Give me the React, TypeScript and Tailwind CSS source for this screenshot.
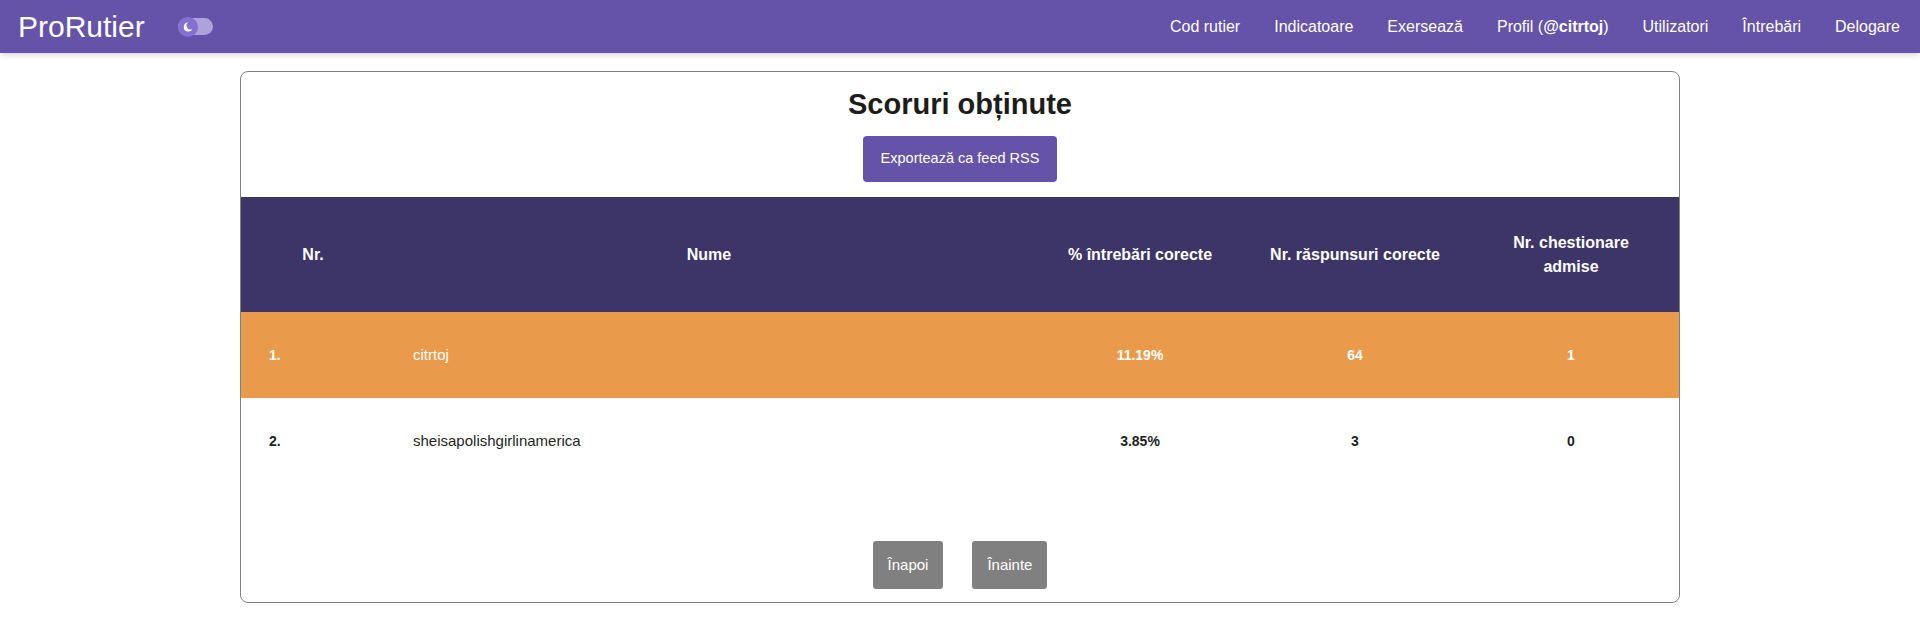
import React from 'react';

const navLinks = ["Cod rutier", "Indicatoare", "Exersează"];
const navLinksAfter = ["Utilizatori", "Întrebări", "Delogare"];

const scores = [
    { nr: "1.", name: "citrtoj", percent: "11.19%", correct: 64, passed: 1, highlight: true },
    { nr: "2.", name: "sheisapolishgirlinamerica", percent: "3.85%", correct: 3, passed: 0, highlight: false },
];

function ThemeToggle() {
    return (
        <div className="relative w-[36px] h-[20px] flex items-center">
            <div className="w-[35px] h-[17px] rounded-full bg-[#ada2d9]" />
            <div className="absolute left-0 top-0 w-[20px] h-[20px] rounded-full bg-[#8470d0] flex items-center justify-center">
                <svg width="14" height="14" viewBox="0 0 20 20">
                    <path d="M10.5 3.5A6.5 6.5 0 1 0 16.5 12.5A5 5 0 0 1 10.5 3.5Z" fill="#ffffff" />
                </svg>
            </div>
        </div>
    );
}

function Navbar() {
    return (
        <nav className="h-[53px] bg-[#6553a9] flex items-center justify-between pl-[18px] pr-[20px] shadow-md relative z-10">
            <div className="flex items-center gap-[33px]">
                <span className="text-[30px] text-white leading-none">ProRutier</span>
                <ThemeToggle />
            </div>
            <ul className="flex items-center gap-[34px] text-[16px] text-white">
                {navLinks.map((link) => (
                    <li key={link}>{link}</li>
                ))}
                <li>Profil (<b>@citrtoj</b>)</li>
                {navLinksAfter.map((link) => (
                    <li key={link}>{link}</li>
                ))}
            </ul>
        </nav>
    );
}

export default function App() {
    return (
        <div className="min-h-[644px] bg-white font-['Liberation_Sans',Arial,sans-serif]">
            <Navbar />

            <div className="w-[1440px] mx-auto mt-[18px] border border-[#808080] rounded-[8px] flex flex-col items-center pb-[13px]">
                <h1 className="mt-[15px] text-[29px] leading-[35px] font-bold text-[#1c1c1c]">Scoruri obținute</h1>

                <button className="mt-[14px] h-[46px] px-[18px] bg-[#6553a9] text-white text-[14.5px] rounded-[4px]">
                    Exportează ca feed RSS
                </button>

                <table className="mt-[15px] w-full table-fixed border-collapse">
                    <colgroup>
                        <col className="w-[144px]" />
                        <col className="w-[648px]" />
                        <col className="w-[214px]" />
                        <col className="w-[216px]" />
                        <col className="w-[216px]" />
                    </colgroup>
                    <thead>
                        <tr className="bg-[#3d3468] text-white text-[16px] font-bold leading-[24px]">
                            <th className="h-[115px] text-center">Nr.</th>
                            <th className="text-center">Nume</th>
                            <th className="text-center whitespace-nowrap">% întrebări corecte</th>
                            <th className="text-center whitespace-nowrap">Nr. răspunsuri corecte</th>
                            <th className="text-center">Nr. chestionare<br />admise</th>
                        </tr>
                    </thead>
                    <tbody>
                        {scores.map((row) => (
                            <tr key={row.nr} className={row.highlight ? "bg-[#e99a4a] text-white" : "bg-white text-[#1f1f1f]"}>
                                <td className="h-[86px] px-[28px] text-[14px] font-bold">{row.nr}</td>
                                <td className="px-[28px] text-[15px]">{row.name}</td>
                                <td className="text-center text-[14px] font-bold">{row.percent}</td>
                                <td className="text-center text-[14px] font-bold">{row.correct}</td>
                                <td className="text-center text-[14px] font-bold">{row.passed}</td>
                            </tr>
                        ))}
                    </tbody>
                </table>

                <div className="mt-[57px] flex gap-[29px]">
                    <button className="h-[48px] px-[15px] bg-[#808080] text-white text-[15px] rounded-[3px]">Înapoi</button>
                    <button className="h-[48px] px-[15px] bg-[#808080] text-white text-[15px] rounded-[3px]">Înainte</button>
                </div>
            </div>
        </div>
    );
}
